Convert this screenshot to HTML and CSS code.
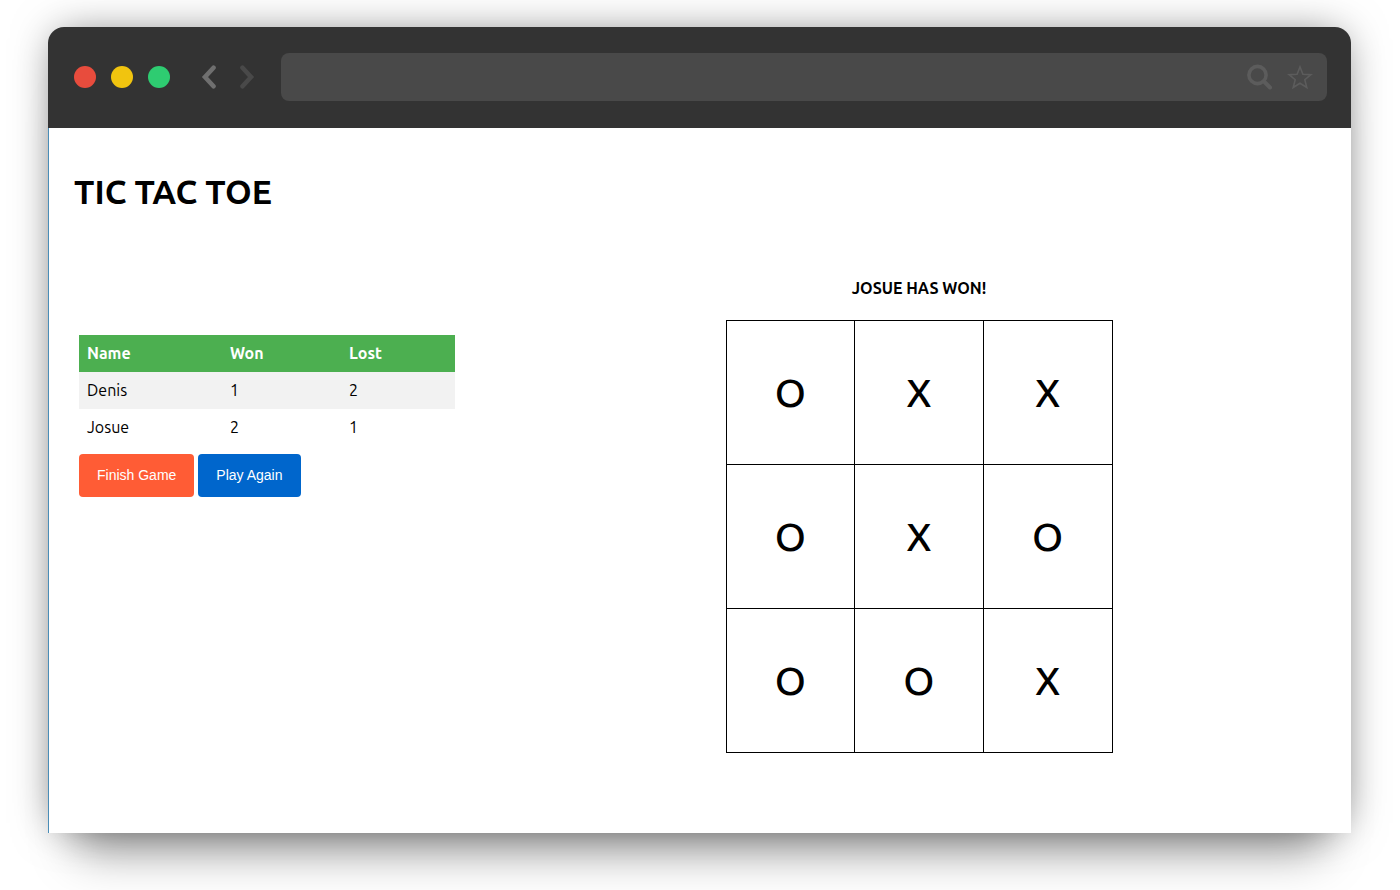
FILE: index.html
```html
<!DOCTYPE html>
<html lang="en">
<head>
<meta charset="utf-8">
<meta name="viewport" content="width=device-width, initial-scale=1">
<title>Tic Tac Toe</title>
<link rel="stylesheet" href="styles.css">
</head>
<body>
<div class="window">
  <header class="chrome">
    <div class="dots"><span class="dot close"></span><span class="dot minimize"></span><span class="dot expand"></span></div>
    <nav class="history">
      <button class="arrow" type="button" aria-label="Back"><svg width="16" height="24" viewBox="0 0 16 24"><path d="M12.500 2.800 4 12l8.500 9.200" fill="none" stroke="#6f6f6f" stroke-width="4.600" stroke-linecap="round"/></svg></button>
      <button class="arrow" type="button" aria-label="Forward"><svg width="16" height="24" viewBox="0 0 16 24"><path d="m3.500 2.800 8.500 9.200-8.500 9.200" fill="none" stroke="#494949" stroke-width="4.600" stroke-linecap="round"/></svg></button>
    </nav>
    <div class="address">
      <input class="url" type="text" aria-label="Address">
      <svg width="26" height="26" viewBox="0 0 26 26" fill="none" stroke="#5c5c5c"><circle cx="10.500" cy="11" r="8.600" stroke-width="3.600"/><path d="m17 17.500 6 6" stroke-width="4" stroke-linecap="round"/></svg>
      <svg width="26" height="26" viewBox="0 0 26 26" fill="none" stroke="#5c5c5c" stroke-width="1.600"><path d="m13 3 2.900 7.200 8 .5-6.100 5 2 7.800-6.800-4.200-6.800 4.200 2-7.800-6.100-5 8-.5z"/></svg>
    </div>
  </header>
  <main class="page">
    <h1 class="title">TIC TAC TOE</h1>
    <div class="columns">
      <section class="scores">
        <table class="score-table">
          <thead><tr><th class="name">Name</th><th class="won">Won</th><th>Lost</th></tr></thead>
          <tbody>
            <tr><td>Denis</td><td>1</td><td>2</td></tr>
            <tr><td>Josue</td><td>2</td><td>1</td></tr>
          </tbody>
        </table>
        <div class="actions">
          <button class="btn finish" type="button">Finish Game</button>
          <button class="btn again" type="button">Play Again</button>
        </div>
      </section>
      <section class="game">
        <h2 class="result">JOSUE HAS WON!</h2>
        <table class="board">
          <tbody>
            <tr><td>O</td><td>X</td><td>X</td></tr>
            <tr><td>O</td><td>X</td><td>O</td></tr>
            <tr><td>O</td><td>O</td><td>X</td></tr>
          </tbody>
        </table>
      </section>
    </div>
  </main>
</div>
</body>
</html>
```
FILE: styles.css
```css
* { box-sizing: border-box; }

body {
  margin: 0;
  padding: 27px 49px 57px 48px;
  background: #fff;
  color: #000;
  font-family: Ubuntu, "Open Sans", sans-serif;
}

.window {
  border-radius: 16px 16px 0 0;
  box-shadow: 0 0 44px -10px rgba(0, 0, 0, .6), 0 50px 44px -30px rgba(0, 0, 0, .34);
}

.chrome {
  display: flex;
  align-items: center;
  padding: 26px 24px 27px 26px;
  background: #333;
  border-radius: 16px 16px 0 0;
}

.dots { display: flex; gap: 15px; }
.dot { width: 22px; height: 22px; border-radius: 50%; }
.close { background: #e84c3d; }
.minimize { background: #f1c40f; }
.expand { background: #2ecc71; }

.history { display: flex; gap: 22px; margin: 0 26px 0 31px; }
.arrow { display: flex; padding: 0; border: 0; background: none; }

.address {
  flex: 1;
  display: flex;
  align-items: center;
  gap: 14px;
  height: 48px;
  padding: 0 14px 0 16px;
  border-radius: 8px;
  background: #494949;
}

.url {
  flex: 1;
  min-width: 0;
  border: 0;
  outline: 0;
  background: none;
  color: #ccc;
  font-size: 18px;
}

.page {
  border-left: 1px solid #4a8db7;
  background: #fff;
  padding: 40px 0 80px;
}

.title {
  margin: 0;
  padding-left: 25px;
  font-size: 34px;
  line-height: 46px;
  font-weight: 700;
}

.columns {
  display: grid;
  grid-template-columns: 1fr 2fr;
  padding: 62px 0 0 6px;
}

.scores { padding: 59px 32px 0 24px; }

.score-table {
  width: 100%;
  border-collapse: collapse;
  font-size: 16px;
  line-height: 21px;
}
.score-table th,
.score-table td { padding: 8px; text-align: left; }
.score-table th { background: #4caf50; color: #fff; font-weight: 700; }
.score-table .name { width: 143px; }
.score-table .won { width: 119px; }
.score-table tbody tr:nth-child(odd) { background: #f2f2f2; }

.actions { display: flex; gap: 4px; margin-top: 8px; }
.btn {
  padding: 0 18px;
  border: 0;
  border-radius: 4px;
  color: #fff;
  font: 14px/43px "Liberation Sans", Arial, sans-serif;
}
.finish { background: #ff5c35; }
.again { background: #0066cc; }

.game { display: flex; flex-direction: column; align-items: center; }
.result {
  margin: 0 0 19px;
  font-size: 16px;
  line-height: 25px;
  font-weight: 700;
}

.board { border-collapse: collapse; table-layout: fixed; width: 387px; }
.board td {
  height: 144px;
  padding: 0;
  border: 1px solid #000;
  text-align: center;
  font-size: 40px;
  line-height: 48px;
  font-weight: 500;
}
```
